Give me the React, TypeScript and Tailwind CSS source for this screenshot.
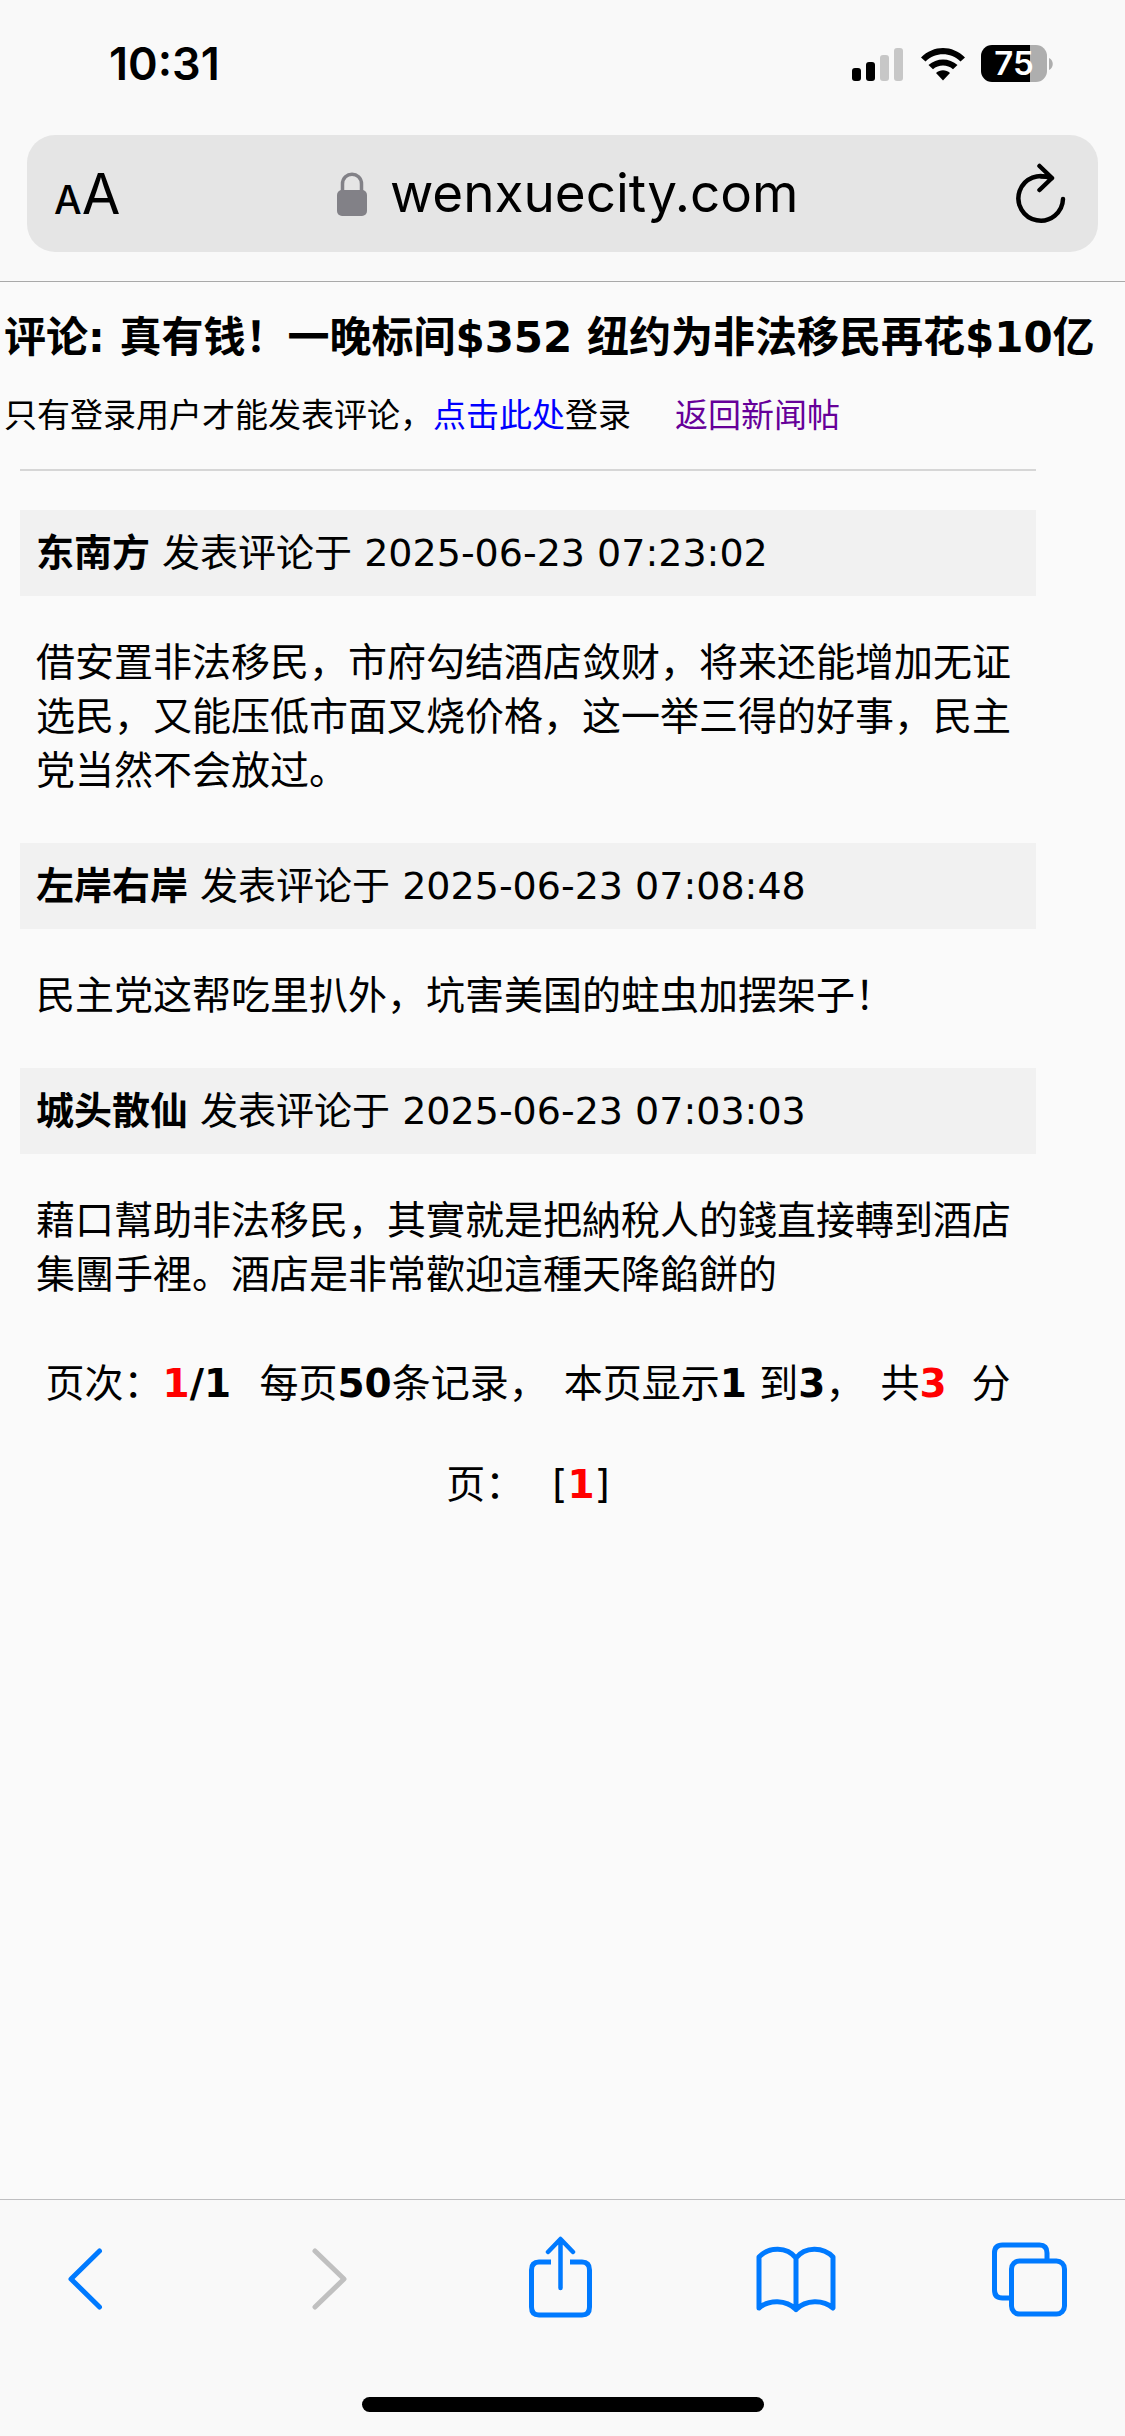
import type { ReactNode } from 'react';

type Comment = {
  author: string;
  time: string;
  body: string;
};

const comments: Comment[] = [
  {
    author: '东南方',
    time: '2025-06-23 07:23:02',
    body: '借安置非法移民，市府勾结酒店敛财，将来还能增加无证选民，又能压低市面叉烧价格，这一举三得的好事，民主党当然不会放过。',
  },
  {
    author: '左岸右岸',
    time: '2025-06-23 07:08:48',
    body: '民主党这帮吃里扒外，坑害美国的蛀虫加摆架子！',
  },
  {
    author: '城头散仙',
    time: '2025-06-23 07:03:03',
    body: '藉口幫助非法移民，其實就是把納稅人的錢直接轉到酒店集團手裡。酒店是非常歡迎這種天降餡餅的',
  },
];

function StatusBar() {
  return (
    <div className="flex h-[135px] items-start justify-between pl-[109px] pr-[72px] pt-[45px]">
      <time className="text-[45px] font-semibold leading-[38px]">10:31</time>
      <div className="flex items-center">
        <svg width="52" height="36" viewBox="0 0 52 36" aria-hidden="true">
          <rect x="0" y="22" width="9" height="13" rx="3" />
          <rect x="14" y="16" width="9" height="19" rx="3" />
          <rect x="28" y="9" width="9" height="26" rx="3" fill="#c7c7c7" />
          <rect x="42" y="2" width="9" height="33" rx="3" fill="#c7c7c7" />
        </svg>
        <svg className="ml-4" width="46" height="36" viewBox="0 0 46 36" aria-hidden="true">
          <path d="M1 11.500C13.500-1.200 32.500-1.200 45 11.500L40.500 15.500C30.500 5.800 15.500 5.800 5.500 15.500Z" />
          <path d="M8.500 19C16.500 11.500 29.500 11.500 37.500 19L33 23.200C27.500 18.200 18.500 18.200 13 23.200Z" />
          <path d="M16 27C20 23.300 26 23.300 30 27L23 34.500Z" />
        </svg>
        <div className="ml-[15px] flex items-center">
          <div className="flex h-[37px] w-[66px] items-center justify-center rounded-[11px] bg-[linear-gradient(90deg,#000_75%,#aeaeae_75%)] text-[33px] font-semibold leading-none text-white">
            75
          </div>
          <svg className="ml-[2px]" width="4" height="12" viewBox="0 0 4 12" aria-hidden="true">
            <path d="M0 0C5 2 5 10 0 12Z" fill="#aeaeae" />
          </svg>
        </div>
      </div>
    </div>
  );
}

function AddressBar() {
  return (
    <div className="mx-[27px] flex h-[117px] items-center justify-between rounded-[28px] bg-[#e5e5e5] pl-[27px] pr-[31px]">
      <button type="button" aria-label="Page settings" className="flex items-baseline leading-none">
        <span className="text-[39px] font-medium">A</span>
        <span className="text-[56px]">A</span>
      </button>
      <div className="flex items-center gap-[22px]">
        <svg width="31" height="44" viewBox="0 0 31 44" aria-hidden="true">
          <rect x="0" y="18" width="30" height="26" rx="5" fill="#828187" />
          <path d="M5.500 20V12C5.500-1 24.500-1 24.500 12V20" fill="none" stroke="#828187" strokeWidth="3.500" />
        </svg>
        <span className="text-[53px] leading-none">wenxuecity.com</span>
      </div>
      <button type="button" aria-label="Reload">
        <svg width="52" height="62" viewBox="0 0 52 62" fill="none" stroke="currentColor" strokeWidth="4.500" strokeLinecap="round" strokeLinejoin="round" aria-hidden="true">
          <path d="M48 36A22.300 22.300 0 1 1 36 15.500" />
          <path d="M24.500 3L37 15L24.500 27M26 13.500Q32 13.200 37 15" />
        </svg>
      </button>
    </div>
  );
}

function CommentItem({ comment }: { comment: Comment }) {
  return (
    <article className="pb-[45px]">
      <header className="bg-[#f1f1f1] px-4 text-[38px] leading-[86px]">
        <b>{comment.author}</b> 发表评论于 {comment.time}
      </header>
      <p className="mt-10 px-4 text-[39px] leading-[54px]">{comment.body}</p>
    </article>
  );
}

function Pager() {
  return (
    <nav className="-mt-[14px] text-center text-[39px] leading-[101px]">
      页次：<b className="text-[#ff0000]">1</b>
      <b className="mr-4">/1</b> 每页<b>50</b>条记录，
      <span className="ml-4">本页显示</span>
      <b>1</b> 到<b>3</b>，<span className="ml-4">共</span>
      <b className="text-[#ff0000]">3</b>&nbsp; 分<br />
      页：<span className="ml-7">[</span>
      <b className="text-[#ff0000]">1</b>]
    </nav>
  );
}

function ToolButton({ label, disabled, children }: { label: string; disabled?: boolean; children: ReactNode }) {
  return (
    <button type="button" aria-label={label} disabled={disabled} className="text-[#007aff] disabled:text-[#c0c0c0]">
      <svg width="80" height="86" viewBox="0 0 80 86" fill="none" stroke="currentColor" strokeWidth="5" strokeLinecap="round" strokeLinejoin="round" aria-hidden="true">
        {children}
      </svg>
    </button>
  );
}

function Toolbar() {
  return (
    <footer className="border-t border-[#bfbfc1] bg-[#f9f9f9] pb-6 pt-[34px]">
      <div className="flex justify-between pl-[52px] pr-[55px]">
        <ToolButton label="Back">
          <path d="M47.500 17L19 45L47.500 73" />
        </ToolButton>
        <ToolButton label="Forward" disabled>
          <path d="M28 17L57 45L28 73" />
        </ToolButton>
        <ToolButton label="Share">
          <path d="M39.500 54V6M27 18L39.500 5L52 18" strokeWidth="4.500" />
          <path d="M30 28H18Q10.500 28 10.500 36V73Q10.500 81 18 81H61Q68.500 81 68.500 73V36Q68.500 28 61 28H49" strokeLinecap="butt" />
        </ToolButton>
        <ToolButton label="Bookmarks">
          <path d="M40 24C31 12.500 13 12.500 3 23V74C13 65.500 30 65.500 40 75.500C50 65.500 67 65.500 77 74V23C67 12.500 49 12.500 40 24ZM40 24V75.500" />
        </ToolButton>
        <ToolButton label="Tabs">
          <path d="M57 25V19Q57 11 49.500 11H12.500Q4.500 11 4.500 19V56Q4.500 64 12.500 64H20" strokeLinecap="butt" />
          <rect x="21.500" y="27" width="53" height="53" rx="8" />
        </ToolButton>
      </div>
      <div className="mx-auto mt-[77px] h-[15px] w-[402px] rounded-full bg-black" />
    </footer>
  );
}

export default function App() {
  return (
    <div className="flex min-h-screen flex-col bg-[#fafafa] font-['Inter','Noto_Sans_CJK_SC',sans-serif] text-black">
      <header className="border-b border-[#a9a9a9] bg-[#f9f9f9] pb-[29px]">
        <StatusBar />
        <AddressBar />
      </header>
      <main lang="zh-CN" className="flex-1 font-['DejaVu_Sans','Noto_Sans_CJK_SC',sans-serif]">
        <h1 className="mt-7 whitespace-nowrap pl-1 text-[42px] font-bold leading-[56px]">
          评论: 真有钱！一晚标间$352 纽约为非法移民再花$10亿
        </h1>
        <p className="mt-[27px] pl-1 text-[33px] leading-[46px]">
          只有登录用户才能发表评论，
          <a href="#login" className="text-[#0000ff]">点击此处</a>
          登录
          <a href="#news" className="ml-11 text-[#660099]">返回新闻帖</a>
        </p>
        <div className="ml-5 mr-[89px]">
          <hr className="mb-[39px] mt-[30px] border-t-2 border-[#d6d6d6]" />
          {comments.map((c) => (
            <CommentItem key={c.time} comment={c} />
          ))}
          <Pager />
        </div>
      </main>
      <Toolbar />
    </div>
  );
}
